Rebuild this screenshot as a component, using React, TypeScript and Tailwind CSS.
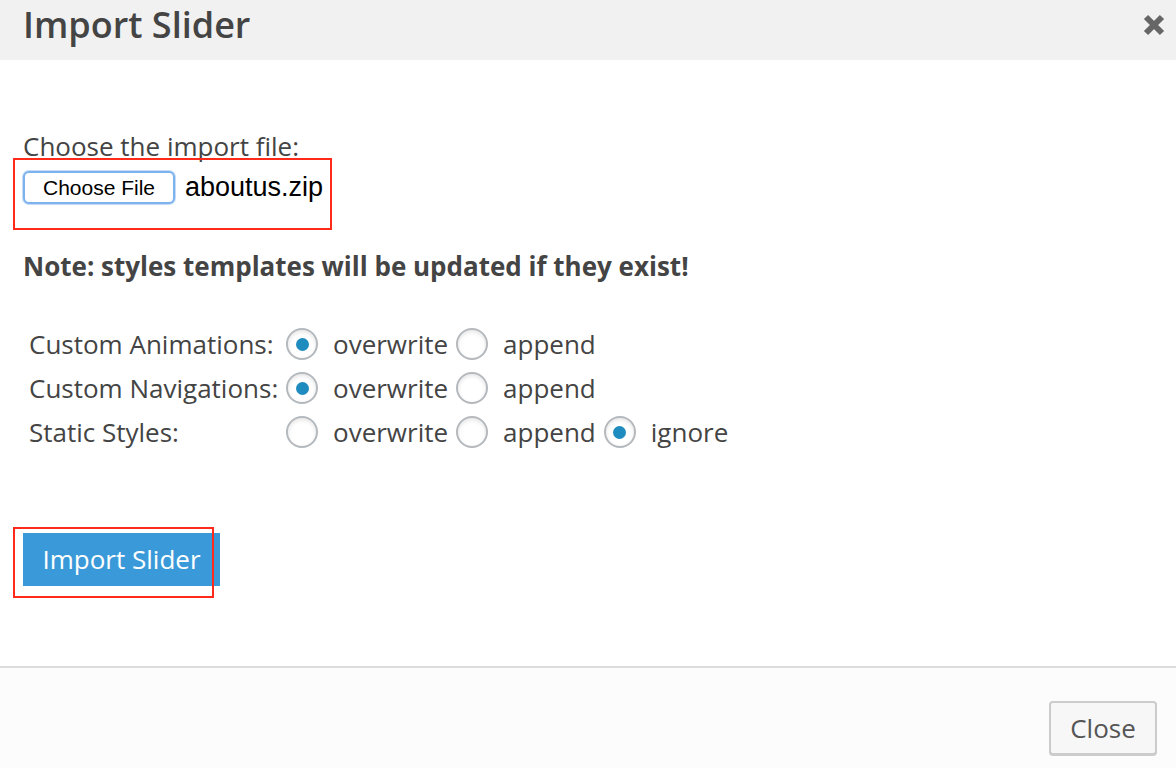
import React from "react";

const OPEN = { fontFamily: '"Open Sans", "Noto Sans", sans-serif' };
const HELV = { fontFamily: '"Liberation Sans", Arial, sans-serif' };

function Radio({ checked }: { checked?: boolean }) {
  return (
    <span className="inline-flex items-center justify-center w-[32px] h-[32px] rounded-full border-2 border-[#b4b9be] bg-white shadow-[inset_0_2px_4px_rgba(0,0,0,0.1)] shrink-0">
      {checked && <span className="block w-[13px] h-[13px] rounded-full bg-[#1e8cbe]" />}
    </span>
  );
}

function Row({ label, sel, ignore }: { label: string; sel: number; ignore?: boolean }) {
  return (
    <div className="flex items-center h-[44px]">
      <div className="w-[263px] pl-[6px]">{label}</div>
      <Radio checked={sel === 0} />
      <span className="ml-[15px] mr-[8px]">overwrite</span>
      <Radio checked={sel === 1} />
      <span className="ml-[15px] mr-[8px]">append</span>
      {ignore && (
        <>
          <Radio checked={sel === 2} />
          <span className="ml-[15px]">ignore</span>
        </>
      )}
    </div>
  );
}

export default function App() {
  return (
    <div className="w-[1176px] h-[768px] bg-white flex flex-col text-[#444]" style={OPEN}>
      <div className="h-[60px] bg-[#f1f1f1] flex items-center justify-between pl-[23px] pr-[11px] shrink-0">
        <h1 className="text-[36px] font-semibold leading-[48px] text-[#444] -mt-[10px]">Import Slider</h1>
        <svg width="22" height="22" viewBox="0 0 22 22" className="-mt-[10px]">
          <path d="M3 3 L19 19 M19 3 L3 19" stroke="#666" strokeWidth="6" strokeLinecap="butt" />
        </svg>
      </div>
      <div className="flex-1 pl-[23px]">
        <div className="mt-[68px] text-[26px] leading-[36px]">Choose the import file:</div>
        <div className="relative flex items-center mt-[7px] h-[33px]">
          <div className="absolute left-[-10px] top-[-13px] w-[319px] h-[72px] border-2 border-[#ff2a1a] pointer-events-none" />
          <button
            className="h-[33px] w-[152px] rounded-[6px] border-2 border-[#7eb2ee] bg-white text-[21px] text-black flex items-center justify-center shadow-[0_0_0_1px_rgba(126,178,238,0.45)]"
            style={HELV}
          >
            Choose File
          </button>
          <span className="ml-[10px] text-[27px] text-black" style={HELV}>aboutus.zip</span>
        </div>
        <div className="mt-[44px] text-[26px] font-bold leading-[36px]">Note: styles templates will be updated if they exist!</div>
        <div className="mt-[38px] text-[26px]">
          <Row label="Custom Animations:" sel={0} />
          <Row label="Custom Navigations:" sel={0} />
          <Row label="Static Styles:" sel={2} ignore />
        </div>
        <div className="relative mt-[79px] w-[197px]">
          <button className="h-[53px] w-[197px] bg-[#3a9ad9] text-white text-[26px] flex items-center justify-center">
            Import Slider
          </button>
          <div className="absolute left-[-10px] top-[-6px] w-[201px] h-[71px] border-2 border-[#ff2a1a] pointer-events-none" />
        </div>
      </div>
      <div className="h-[102px] border-t-2 border-[#dddddd] bg-[#fcfcfc] flex items-end justify-end pr-[19px] pb-[13px] shrink-0">
        <button className="h-[54px] w-[108px] rounded-[4px] border-2 border-[#cccccc] bg-[#f7f7f7] text-[26px] text-[#555] shadow-[0_1px_0_#ccc]">
          Close
        </button>
      </div>
    </div>
  );
}
